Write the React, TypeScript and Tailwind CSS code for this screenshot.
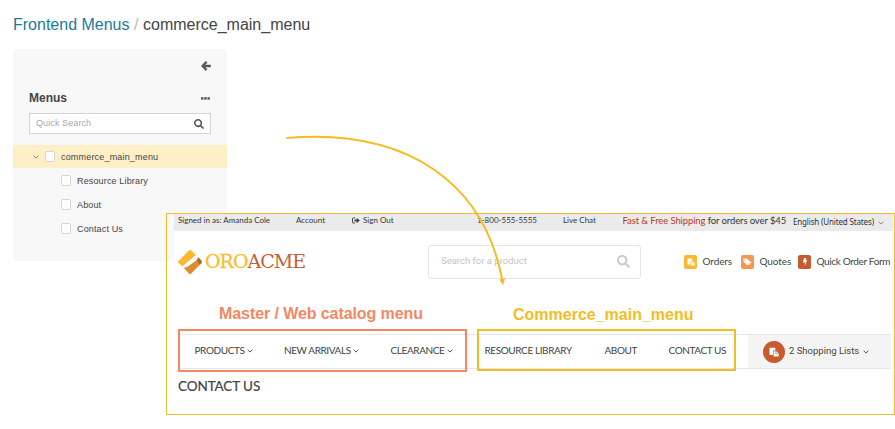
import { FaSearch } from "react-icons/fa";
import type { ReactNode } from "react";

function Chevron({ className = "" }: { className?: string }) {
  return (
    <svg viewBox="0 0 6 4" className={`h-[4px] w-[6px] shrink-0 ${className}`} fill="none" stroke="currentColor" strokeWidth="0.9">
      <path d="M0.6 0.7 3 3.1 5.4 0.7" />
    </svg>
  );
}

function Paste({ className = "" }: { className?: string }) {
  return (
    <svg viewBox="0 0 10 10" className={className} fill="currentColor">
      <path d="M.5.7H6.3V3.6H4V8H.5Z" />
      <path fillRule="evenodd" d="M4.6 4.2H7.2L9.7 6.5V9.5H4.6ZM6.6 4.6V7H9.2V6.5H7.2V4.6Z" />
    </svg>
  );
}

function SignOut() {
  return (
    <svg viewBox="0 0 8 7" className="mr-[3px] h-[7px] w-[8px]">
      <path d="M3 1H1.2Q.5 1 .5 1.7V5.3Q.5 6 1.2 6H3" fill="none" stroke="#444" />
      <path d="M2.5 2.4H4.7V.8L7.8 3.5 4.7 6.2V4.6H2.5Z" fill="#444" />
    </svg>
  );
}

function Check() {
  return <span className="h-[11px] w-[10px] shrink-0 rounded-[2px] border border-[#d6d6d6] bg-white" />;
}

function Sidebar() {
  return (
    <aside className="mt-[14px] ml-[13px] h-[212px] w-[214px] rounded-[3px] bg-[#f8f8f8] pt-[12px] text-[#444]">
      <div className="flex justify-end pr-[16px]">
        <svg viewBox="0 0 10 10" className="size-[10px]" fill="none" stroke="#5a5a5a" strokeWidth="2.3">
          <path d="M5.6 0.9 1.6 5 5.6 9.1M1.8 5H9.8" />
        </svg>
      </div>
      <div className="mt-[17px] flex h-[20px] items-center justify-between pr-[17px] pl-[16px]">
        <h2 className="text-[12px] font-bold">Menus</h2>
        <svg viewBox="0 0 9 3" className="h-[3px] w-[9px]" fill="#666">
          <rect width="2.5" height="2.8" rx="0.6" />
          <rect x="3.2" width="2.5" height="2.8" rx="0.6" />
          <rect x="6.4" width="2.5" height="2.8" rx="0.6" />
        </svg>
      </div>
      <div className="mx-[16px] mt-[5px] flex h-[21px] items-center justify-between border border-[#d4d4d4] bg-white pr-[6px] pl-[6px]">
        <span className="text-[9px] tracking-[0.1px] text-[#aaa]">Quick Search</span>
        <FaSearch className="size-[10px] text-[#555]" />
      </div>
      <div className="mt-[11px] flex h-[23px] items-center bg-[#ffefc6] pl-[20px] text-[9px]">
        <Chevron className="mr-[6px] text-[#777]" />
        <Check />
        <span className="ml-[6px] pt-[2px] tracking-[0.18px]">commerce_main_menu</span>
      </div>
      {["Resource Library", "About", "Contact Us"].map((t) => (
        <div key={t} className="flex h-[24px] items-center pt-px pl-[48px] text-[9px]">
          <Check />
          <span className="ml-[6px] pt-[2px] tracking-[0.15px]">{t}</span>
        </div>
      ))}
    </aside>
  );
}

function Quick({ color, label, children }: { color: string; label: ReactNode; children: ReactNode }) {
  return (
    <div className="flex items-center gap-[5.5px] whitespace-nowrap">
      <span className={`flex h-[14px] w-[13px] items-center justify-center rounded-[2px] text-white ${color}`}>{children}</span>
      {label}
    </div>
  );
}

function Storefront() {
  return (
    <section className="absolute top-[213px] left-[166px] h-[202px] w-[729px] border border-[#efbd2d] pl-[7px] font-[Lato,sans-serif] whitespace-nowrap text-[#444]">
      <div className="h-full bg-white">
        <div className="mr-px flex h-[17px] items-start bg-[#ebebeb] pl-[4px] text-[8px] leading-[13px] text-[#333]">
          <span className="w-[118px] shrink-0">Signed in as: Amanda Cole</span>
          <span className="w-[56px] shrink-0">Account</span>
          <span className="flex w-[125px] shrink-0 items-center"><SignOut />Sign Out</span>
          <span className="w-[86px] shrink-0">1-800-555-5555</span>
          <span className="w-[59.5px] shrink-0">Live Chat</span>
          <span className="w-[170.5px] shrink-0 text-[9.5px] leading-[14px] tracking-[-0.11px]"><b className="font-normal text-[#b83a1e]">Fast &amp; Free Shipping</b> for orders over $45</span>
          <span className="w-[85px] shrink-0 font-[Noto_Sans,sans-serif] text-[8px] leading-[16px] tracking-[-0.15px]">English (United States)</span>
          <Chevron className="mt-[7px] text-[#777]" />
        </div>
        <div className="flex h-[61px] items-center pl-[4px]">
          <div className="flex w-[250px] shrink-0 items-center">
            <svg viewBox="0 0 24 24" className="size-[24px]">
              <path d="M0.5 11 10.8.6Q12-.4 13.2.6L18 5 4.3 16.3.5 13Q-.3 12 .5 11Z" fill="#fdb833" />
              <path d="M5.8 17.8 9 17 18.7 10.2 20.5 7.6 23.5 11Q24.3 12 23.5 13L13.2 23.4Q12 24.4 10.8 23.4Z" fill="#dc8b32" />
              <path d="M18.7 10.2 20.5 7.2 23.5 10.8Q24.3 12 23.5 12.9L21.5 14.8Z" fill="#a9702c" />
            </svg>
            <span className="mb-px ml-[3px] font-[DejaVu_Serif,serif] text-[19px] leading-[24px] tracking-[-1px] text-[#fbbd32] [-webkit-text-stroke:0.3px_currentColor]">ORO<span className="text-[#c95e36] [-webkit-text-stroke:0px]">ACME</span></span>
          </div>
          <div className="flex h-[34px] w-[213px] shrink-0 items-center justify-between rounded-[3px] border border-[#e5e5e5] pr-[10px] pl-[12px] font-[Roboto,sans-serif] text-[9.5px] text-[#c4c4c4]">
            <span>Search for a product</span>
            <FaSearch className="size-[13px] text-[#ccc]" />
          </div>
          <div className="ml-[43px] flex text-[10px] tracking-[-0.1px] text-[#444]">
            <div className="w-[57px] shrink-0"><Quick color="bg-[#fdb833]" label="Orders"><Paste className="size-[8px]" /></Quick></div>
            <div className="w-[57px] shrink-0">
              <Quick color="bg-[#f2984f]" label="Quotes">
                <svg viewBox="0 0 9 8" className="h-[8px] w-[9px]" fill="currentColor"><path fillRule="evenodd" d="M.5.5H3.8L7.2 4 4 7.2.5 3.8ZM1.4 1.4v1h1v-1Z" /><path d="M4.8.5 8.6 4.2 5.6 7.2 5.1 6.7 7.8 4Z" /></svg>
              </Quick>
            </div>
            <Quick color="bg-[#c75a2e]" label={<span className="tracking-[-0.35px]">Quick Order Form</span>}>
              <svg viewBox="0 0 6 8" className="h-[8px] w-[6px]" fill="currentColor"><path d="M2 0H4.3L3.6 2.4 5.3 2.1 2.7 8 3 4.3 1 4.7Z" /></svg>
            </Quick>
          </div>
        </div>
        <div className="flex h-[37px] items-center pt-[6px] pl-[45px] font-[Liberation_Sans,Arial,sans-serif] text-[16px] font-bold">
          <span className="w-[294px] tracking-[-0.08px] text-[#f48862]">Master / Web catalog menu</span>
          <span className="pt-[2px] text-[#f3bd22]">Commerce_main_menu</span>
        </div>
        <div className="-mt-px ml-[4px] flex h-[45px] w-[713px] items-start pt-px text-[10px] tracking-[-0.4px]">
          <div className="flex h-[43px] w-[289px] shrink-0 border-2 border-[#f48862] pt-[3px]">
            <div className="flex h-[35px] w-full items-center border-y border-[#e7e7e7] pb-[2px] pl-[14.5px]">
              <span className="flex w-[89.5px] items-center gap-[2.5px]">PRODUCTS<Chevron /></span>
              <span className="flex w-[106.5px] items-center gap-[2.5px]">NEW ARRIVALS<Chevron /></span>
              <span className="flex items-center gap-[2.5px]">CLEARANCE<Chevron /></span>
            </div>
          </div>
          <div className="mt-[5px] h-[35px] w-[10px] shrink-0 border-y border-[#e7e7e7]" />
          <div className="h-[42px] w-[259px] shrink-0 border-2 border-[#f3bd22] pt-[3px]">
            <div className="flex h-[35px] items-center border-y border-[#e7e7e7] pb-[2px] pl-[5.5px]">
              <span className="w-[120px]">RESOURCE LIBRARY</span>
              <span className="w-[64px]">ABOUT</span>
              <span>CONTACT US</span>
            </div>
          </div>
          <div className="mt-[5px] h-[35px] w-[12px] shrink-0 border-y border-[#e7e7e7]" />
          <div className="mt-[5px] flex h-[35px] flex-1 items-center border-y border-[#e7e7e7] bg-[#f4f4f4] pl-[15px]">
            <span className="flex size-[22px] shrink-0 items-center justify-center rounded-full bg-[#c75a2e] text-white"><Paste className="size-[10px]" /></span>
            <span className="ml-[4px] w-[74px] shrink-0 pb-px font-[Roboto,sans-serif] text-[9.5px] tracking-[0px]">2 Shopping Lists</span>
            <Chevron />
          </div>
        </div>
        <h1 className="ml-[4px] pt-[3px] text-[13.5px] leading-[20px] tracking-[-0.1px] [-webkit-text-stroke:0.2px_currentColor]">CONTACT US</h1>
      </div>
    </section>
  );
}

export default function App() {
  return (
    <main className="relative h-[429px] w-[895px] overflow-hidden bg-white font-[Liberation_Sans,Arial,sans-serif]">
      <header className="flex h-[35px] items-end pl-[13px] text-[16px] leading-[20px] text-[#444]">
        <span className="w-[121px] text-[#197b9d]">Frontend Menus</span>
        <span className="w-[9px] text-[#bbb]">/</span>
        <span>commerce_main_menu</span>
      </header>
      <Sidebar />
      <Storefront />
      <svg viewBox="0 0 895 429" className="pointer-events-none absolute inset-0 h-[429px] w-[895px]">
        <path d="M286.5 138C410 128 484 185 502 279" fill="none" stroke="#f3bd22" strokeWidth="2" />
        <path d="M499.2 279.5 505.2 278.3 503 285Z" fill="#f3bd22" />
      </svg>
    </main>
  );
}
